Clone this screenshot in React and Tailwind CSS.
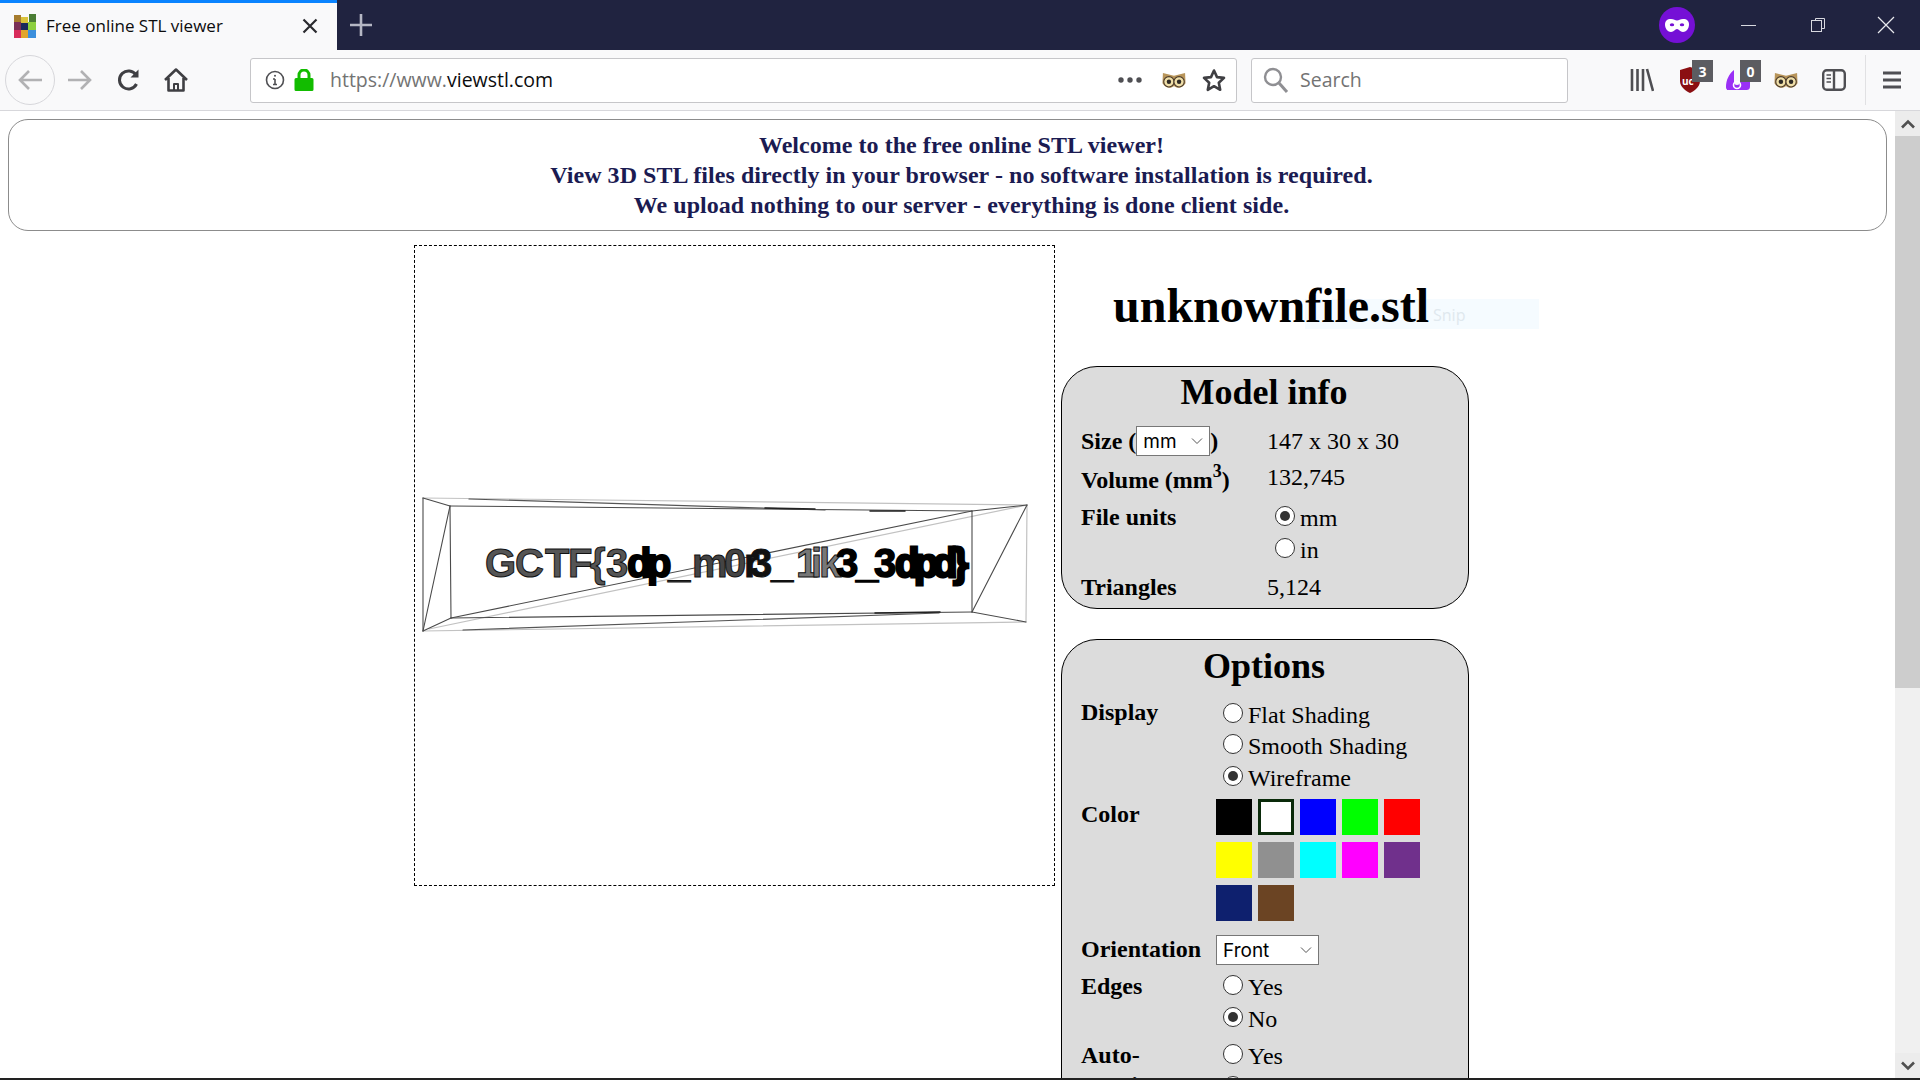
import React from "react";

const serif = "font-['Liberation_Serif',serif]";
const ui = "font-['Open_Sans','Noto_Sans',sans-serif]";

function Radio({ on }) {
  return (
    <span className="inline-flex h-[20px] w-[20px] shrink-0 items-center justify-center rounded-full border border-[#333] bg-white">
      {on && <span className="h-[10px] w-[10px] rounded-full bg-[#333]" />}
    </span>
  );
}

function RadioRow({ on, label, h = "h-[32px]" }) {
  return (
    <div className={"flex items-center gap-[5px] " + h}>
      <Radio on={on} />
      <span className="relative top-[2px]">{label}</span>
    </div>
  );
}

function FakeSelect({ label, w }) {
  return (
    <span className={"inline-flex h-[30px] items-center justify-between border border-[#777] bg-white pl-[6px] pr-[6px] font-['Inter',sans-serif] text-[19px] font-normal " + w}>
      <span className="relative top-[1px]">{label}</span>
      <svg width="12" height="8" viewBox="0 0 12 8" fill="none" stroke="#555" strokeWidth="1"><path d="M1 1.500 6 6.500 11 1.500" /></svg>
    </span>
  );
}

function TitleBar() {
  return (
    <div className="flex h-[50px] shrink-0 items-stretch bg-[#202340]">
      <div className={"flex w-[337px] items-center border-t-[3px] border-[#0a84ff] bg-[#f9f9fa] pb-[2px] pl-[14px] pr-[19px] text-[#0c0c0d] " + ui}>
        <svg width="22" height="24" viewBox="0 0 22 24" className="shrink-0">
          <rect x="0" y="1" width="7" height="7" fill="#a67c2e" /><rect x="7" y="3" width="7" height="6" fill="#d9c23a" /><rect x="15" y="0" width="7" height="8" fill="#4b7d34" />
          <rect x="0" y="8" width="7" height="8" fill="#7a2f56" /><rect x="7" y="9" width="7" height="7" fill="#1a2a5c" /><rect x="14" y="8" width="8" height="8" fill="#8ccf3e" />
          <rect x="0" y="16" width="7" height="8" fill="#d82c5a" /><rect x="7" y="16" width="7" height="8" fill="#e0a52c" /><rect x="14" y="16" width="8" height="8" fill="#3c8fdc" />
        </svg>
        <span className="ml-[10px] flex-1 text-[17px]">Free online STL viewer</span>
        <svg width="16" height="16" viewBox="0 0 16 16" stroke="#2a2a2e" strokeWidth="2.200"><path d="M1.500 1.500 14.500 14.500M14.500 1.500 1.500 14.500" /></svg>
      </div>
      <div className="ml-[2px] flex w-[44px] items-center justify-center">
        <svg width="22" height="22" viewBox="0 0 22 22" stroke="#b5b7c4" strokeWidth="2.600"><path d="M11 0v22M0 11h22" /></svg>
      </div>
      <div className="flex-1" />
      <div className="flex items-center justify-center pr-[17px]">
        <span className="flex h-[36px] w-[36px] items-center justify-center rounded-full bg-[#7510d6]">
          <svg width="24" height="13" viewBox="0 0 24 13"><path fillRule="evenodd" fill="#fff" d="M6 0C9 0 10 1.500 12 1.500S15 0 18 0c4 0 6 2 6 5.500 0 4.500-3 7.500-6 7.500-3 0-4-3-6-3s-3 3-6 3C3 13 0 10 0 5.500 0 2 2 0 6 0ZM7 4.200a2.200 1.500 0 1 0 0 3a2.200 1.500 0 0 0 0-3ZM17 4.200a2.200 1.500 0 1 0 0 3a2.200 1.500 0 0 0 0-3Z" /></svg>
        </span>
      </div>
      <div className="flex w-[72px] items-center justify-center">
        <span className="h-px w-[15px] bg-[#d8d9e0]" />
      </div>
      <div className="flex w-[67px] items-center justify-center">
        <svg width="16" height="16" viewBox="0 0 16 16" fill="none" stroke="#d8d9e0"><path d="M5.500 3.500V1.500H14.500V11.500H11.500" /><rect x="1.500" y="3.500" width="10" height="11" /></svg>
      </div>
      <div className="flex w-[69px] items-center justify-center">
        <svg width="18" height="18" viewBox="0 0 18 18" stroke="#e8e9ee" strokeWidth="1.200"><path d="M1 1 17 17M17 1 1 17" /></svg>
      </div>
    </div>
  );
}

function Owl({ size = 26 }) {
  return (
    <svg width={size} height={size * 0.7} viewBox="0 0 26 18">
      <path d="M1 1 13 4 25 1 25.500 12C22 18 16 18 13 15 10 18 4 18 .5 12Z" fill="#b8955a" />
      <circle cx="7.500" cy="10.500" r="5.600" fill="#f0dfa8" stroke="#4a3a2a" strokeWidth="1.200" />
      <circle cx="18.500" cy="10.500" r="5.600" fill="#f0dfa8" stroke="#4a3a2a" strokeWidth="1.200" />
      <circle cx="7.500" cy="10.500" r="2.400" fill="#2e2a26" /><circle cx="18.500" cy="10.500" r="2.400" fill="#2e2a26" />
    </svg>
  );
}

function Badge({ n }) {
  return (
    <span className={"absolute left-[14px] top-[-6px] flex h-[22px] w-[21px] items-center justify-center bg-[#5c5c61] text-[14px] font-bold text-white " + ui}>{n}</span>
  );
}

function Toolbar() {
  return (
    <div className="flex h-[61px] shrink-0 items-center border-b border-[#d7d7db] bg-[#f9f9fa]">
      <div className="ml-[5px] flex h-[50px] w-[50px] items-center justify-center rounded-full border border-[#d7d7db] bg-[#f9f9fa]">
        <svg width="26" height="24" viewBox="0 0 26 24" fill="none" stroke="#b1b1b3" strokeWidth="2.600"><path d="M25 12H3M12 3 3 12l9 9" /></svg>
      </div>
      <div className="ml-[12px] flex w-[26px] justify-center">
        <svg width="26" height="24" viewBox="0 0 26 24" fill="none" stroke="#b1b1b3" strokeWidth="2.600"><path d="M1 12H23M14 3l9 9-9 9" /></svg>
      </div>
      <div className="ml-[23px] flex w-[26px] justify-center">
        <svg width="24" height="24" viewBox="0 0 24 24" fill="none" stroke="#3f3f43" strokeWidth="3"><path d="M19.500 16A9 9 0 1 1 19 7" /><path d="M21.500 1.500V9.500H13.500Z" fill="#3f3f43" stroke="none" /></svg>
      </div>
      <div className="ml-[21px] flex w-[26px] justify-center">
        <svg width="26" height="26" viewBox="0 0 26 26" fill="none" stroke="#3f3f43" strokeWidth="2.600" strokeLinejoin="round"><path d="M2 13 13 2.500 24 13M5.500 11V23.500H20.500V11" /><path d="M11 23v-6h4v6" strokeWidth="2" /></svg>
      </div>
      <div className={"ml-[61px] flex h-[45px] w-[987px] items-center rounded-[3px] border border-[#c6c6c9] bg-white text-[19.500px] " + ui}>
        <svg width="20" height="20" viewBox="0 0 20 20" fill="none" stroke="#4f4f53" strokeWidth="1.600" className="ml-[14px]"><circle cx="10" cy="10" r="8.500" /><path d="M10 9v5.500M8 9h2M8 14.500h4" /><circle cx="10" cy="5.800" r="1" fill="#4f4f53" stroke="none" /></svg>
        <svg width="20" height="22" viewBox="0 0 20 22" className="ml-[9px]"><path fill="#12bc00" d="M2 9h16a1.500 1.500 0 0 1 1.500 1.500v10a1.500 1.500 0 0 1-1.500 1.500H2A1.500 1.500 0 0 1 .5 20.500v-10A1.500 1.500 0 0 1 2 9Z" /><path fill="none" stroke="#12bc00" strokeWidth="3" d="M5 10V6a5 5 0 0 1 10 0v4" /></svg>
        <span className="ml-[16px] flex-1 whitespace-nowrap text-[#737373]">https://www.<span className="text-[#0c0c0d]">viewstl.com</span></span>
        <svg width="24" height="6" viewBox="0 0 24 6" fill="#4f4f53" className="mr-[20px]"><circle cx="3" cy="3" r="2.700" /><circle cx="12" cy="3" r="2.700" /><circle cx="21" cy="3" r="2.700" /></svg>
        <Owl size={24} />
        <svg width="24" height="24" viewBox="0 0 24 24" fill="none" stroke="#3f3f43" strokeWidth="2.600" strokeLinejoin="round" className="ml-[16px] mr-[10px]"><path d="M12 2.500l3 6.600 7 .8-5.200 4.800 1.400 7.100-6.200-3.600-6.200 3.600 1.400-7.100L2 9.900l7-.8z" /></svg>
      </div>
      <div className={"ml-[14px] flex h-[45px] w-[317px] items-center rounded-[3px] border border-[#c6c6c9] bg-white text-[19.500px] text-[#737373] " + ui}>
        <svg width="26" height="26" viewBox="0 0 26 26" fill="none" stroke="#8f8f93" strokeWidth="2.400" className="ml-[11px]"><circle cx="10" cy="10" r="8" /><path d="M16 16l8 9" strokeWidth="3" /></svg>
        <span className="ml-[11px]">Search</span>
      </div>
      <div className="relative ml-[62px] flex w-[24px] justify-center">
        <svg width="24" height="24" viewBox="0 0 24 24" fill="none" stroke="#4f4f53" strokeWidth="2.600"><path d="M2 1v22M7.500 1v22M13 1v22M17 1l6 22" /></svg>
      </div>
      <div className="relative ml-[24px] flex h-[28px] w-[24px] items-center justify-center">
        <svg width="22" height="26" viewBox="0 0 22 26"><path fill="#8b0f12" d="M11 0 21 3V14C21 20 15 24 11 26 7 24 1 20 1 14V3Z" /></svg>
        <span className={"absolute left-[4px] top-[8px] text-[10px] font-bold text-white " + ui}>uc</span>
        <Badge n="3" />
      </div>
      <div className="relative ml-[24px] flex h-[28px] w-[24px] items-center justify-center">
        <svg width="24" height="24" viewBox="0 0 24 24"><path fill="#9a30f5" d="M8 2C3 6 0 12 0 19c0 3 2 3 4 3h16c3 0 4-1 4-4V8H14v6a3 3 0 0 1-6 0Z" /><circle cx="11" cy="17" r="3.500" fill="none" stroke="#fff" strokeWidth="1.600" /></svg>
        <Badge n="0" />
      </div>
      <div className="ml-[24px] flex w-[24px] justify-center"><Owl size={24} /></div>
      <div className="ml-[24px] flex w-[24px] justify-center">
        <svg width="24" height="22" viewBox="0 0 24 22" fill="none" stroke="#4f4f53" strokeWidth="2.400"><rect x="1.200" y="1.200" width="21.600" height="19.600" rx="3.500" /><path d="M12 1v20" /><path d="M4.500 6H9M4.500 9.500H9M4.500 13H9" strokeWidth="1.400" /></svg>
      </div>
      <div className="ml-[19px] h-[50px] w-px bg-[#e1e1e3]" />
      <div className="ml-[16px] flex w-[20px] justify-center">
        <svg width="20" height="20" viewBox="0 0 20 20" stroke="#4f4f53" strokeWidth="2.800"><path d="M1 3h18M1 10h18M1 17h18" /></svg>
      </div>
    </div>
  );
}

const glyphX = "70 100 130 153 175 191 212 232 253 277 309 329 335 356 381 396 404 421 441 459 480 499 518 538";

function Wire() {
  return (
    <svg width="639" height="639" viewBox="0 0 639 639" className="block">
      <g fill="none" strokeLinecap="round">
        <g stroke="#c2c2c2" strokeWidth="1.200">
          <path d="M8 252 612 259" />
          <path d="M612 259 611 376" />
          <path d="M8 385 611 376" />
          <path d="M14 383 612 259" />
        </g>
        <g stroke="#4a4a4a" strokeWidth="1.100">
          <path d="M8 252 8 385" />
          <path d="M8 252 35 260" />
          <path d="M35 260 557 265" />
          <path d="M35 260 36 372" />
          <path d="M35 260 8 385" />
          <path d="M36 372 557 366" />
          <path d="M557 265 557 366" />
          <path d="M557 265 612 259" />
          <path d="M612 259 557 366" />
          <path d="M557 366 611 376" />
          <path d="M8 385 36 372" />
          <path d="M36 372 557 265" />
        </g>
        <g stroke="#555" strokeWidth="1.200">
          <path d="M54 253 410 264" />
          <path d="M48 384 524 367" />
        </g>
        <g stroke="#222" strokeWidth="1.500">
          <path d="M350 262 400 263M455 265 490 265" />
          <path d="M460 367 525 366" />
        </g>
      </g>
      <text x={glyphX} y="331" fontFamily="Liberation Sans, sans-serif" fontSize="40" fontWeight="700">
        <tspan fill="#555" stroke="#111" strokeWidth="1">GCTF{"{"}3</tspan>
        <tspan fill="#000" stroke="#000" strokeWidth="2">dp</tspan>
        <tspan fill="#444" stroke="#111" strokeWidth="1">_m0</tspan>
        <tspan fill="#111" stroke="#111" strokeWidth="1">r3_</tspan>
        <tspan fill="#777" stroke="#111" strokeWidth="1">1ik</tspan>
        <tspan fill="#000" stroke="#000" strokeWidth="1.500">3_3</tspan>
        <tspan fill="#000" stroke="#000" strokeWidth="2.800">dpd{"}"}</tspan>
      </text>
    </svg>
  );
}

const swatches = ["bg-black", "bg-white border-[3px] border-[#0a2a0a]", "bg-[#0000ff]", "bg-[#00ff00]", "bg-[#ff0000]", "bg-[#ffff00]", "bg-[#909090]", "bg-[#00ffff]", "bg-[#ff00ff]", "bg-[#70308c]", "bg-[#0e206e]", "bg-[#6b4423]"];

function Page() {
  const tight = "h-[31.500px]";
  return (
    <div className={"relative min-w-0 flex-1 overflow-hidden bg-white pl-[8px] pr-[8px] pt-[8px] text-[24px] text-black " + serif}>
      <div className="flex h-[112px] flex-col items-center justify-center rounded-[20px] border border-[#8c8c8c] pl-[28px] text-[24px] font-bold leading-[30px] tracking-[0.045px] text-[#1b1b52]">
        <div>Welcome to the free online STL viewer!</div>
        <div>View 3D STL files directly in your browser - no software installation is required.</div>
        <div>We upload nothing to our server - everything is done client side.</div>
      </div>
      <div className="ml-[406px] mt-[14px] flex items-start gap-[6px]">
        <div className="h-[641px] w-[641px] shrink-0 border border-dashed border-black"><Wire /></div>
        <div className="w-[408px] shrink-0">
          <div className="relative flex h-[121px] items-start pl-[52px] pt-[35px]">
            <div className={"absolute left-[244px] top-[54px] h-[30px] w-[234px] bg-[#f5fbff] pl-[128px] pt-[6px] text-[16px] leading-[20px] text-[#dfe8ee] " + ui}>Snip</div>
            <h1 className="relative text-[48px] font-bold leading-[52px]">unknownfile.stl</h1>
          </div>
          <div className="h-[243px] rounded-[36px] border border-black bg-[#dcdcdc] px-[19px] pt-[4px]">
            <h2 className="pr-[2px] text-center text-[36px] font-bold leading-[42px]">Model info</h2>
            <div className="mt-[12px] grid grid-cols-[186px_1fr] leading-[28px]">
              <div className="flex h-[32px] items-center font-bold whitespace-nowrap">Size (<FakeSelect label="mm" w="w-[74px]" />)</div>
              <div className="flex h-[32px] items-center">147 x 30 x 30</div>
              <div className="flex h-[40px] items-center pt-[6px] font-bold">Volume (mm<sup className="text-[18px] leading-none">3</sup>)</div>
              <div className="flex h-[40px] items-center">132,745</div>
              <div className="mt-[5px] font-bold leading-[30px]">File units</div>
              <div className="mt-[3px] flex flex-col pl-[8px]"><RadioRow on label="mm" /><RadioRow label="in" /></div>
              <div className="mt-[9px] font-bold">Triangles</div>
              <div className="mt-[9px]">5,124</div>
            </div>
          </div>
          <div className="mt-[30px] h-[560px] rounded-[36px] border border-black bg-[#dcdcdc] px-[19px] pt-[5px]">
            <h2 className="pr-[2px] text-center text-[36px] font-bold leading-[42px]">Options</h2>
            <div className="mt-[10px] grid grid-cols-[135px_1fr] leading-[30px]">
              <div className="font-bold">Display</div>
              <div className="pl-[7px]"><RadioRow h={tight} label="Flat Shading" /><RadioRow h={tight} label="Smooth Shading" /><RadioRow h={tight} on label="Wireframe" /></div>
              <div className="mt-[7px] font-bold">Color</div>
              <div className="mt-[7.500px] grid w-[204px] grid-cols-[36px_36px_36px_36px_36px] gap-x-[6px] gap-y-[7px]">
                {swatches.map((c) => <div key={c} className={"h-[36px] w-[36px] " + c} />)}
              </div>
              <div className="mt-[13px] font-bold">Orientation</div>
              <div className="mt-[11.500px] h-[30px]"><FakeSelect label="Front" w="w-[103px]" /></div>
              <div className="mt-[6.500px] font-bold">Edges</div>
              <div className="mt-[5px] pl-[7px]"><RadioRow label="Yes" /><RadioRow on label="No" /></div>
              <div className="mt-[7px] font-bold">Auto-<br />rotation</div>
              <div className="mt-[5px] pl-[7px]"><RadioRow label="Yes" /><RadioRow label="No" /></div>
            </div>
          </div>
        </div>
      </div>
    </div>
  );
}

function Scrollbar() {
  return (
    <div className="flex w-[25px] shrink-0 flex-col bg-[#f0f0f0]">
      <div className="flex h-[25px] items-center justify-center bg-[#ececec]">
        <svg width="14" height="10" viewBox="0 0 14 10" fill="none" stroke="#505050" strokeWidth="2.600"><path d="M1 8.500 7 2.500l6 6" /></svg>
      </div>
      <div className="h-[552px] bg-[#cdcdcd]" />
      <div className="flex-1" />
      <div className="flex h-[25px] items-center justify-center bg-[#ececec]">
        <svg width="14" height="10" viewBox="0 0 14 10" fill="none" stroke="#505050" strokeWidth="2.600"><path d="M1 1.500l6 6 6-6" /></svg>
      </div>
    </div>
  );
}

export default function App() {
  return (
    <div className="flex h-[1080px] w-[1920px] flex-col overflow-hidden bg-white">
      <TitleBar />
      <Toolbar />
      <div className="flex min-h-0 flex-1">
        <Page />
        <Scrollbar />
      </div>
      <div className="h-[2px] shrink-0 bg-[#222]" />
    </div>
  );
}
